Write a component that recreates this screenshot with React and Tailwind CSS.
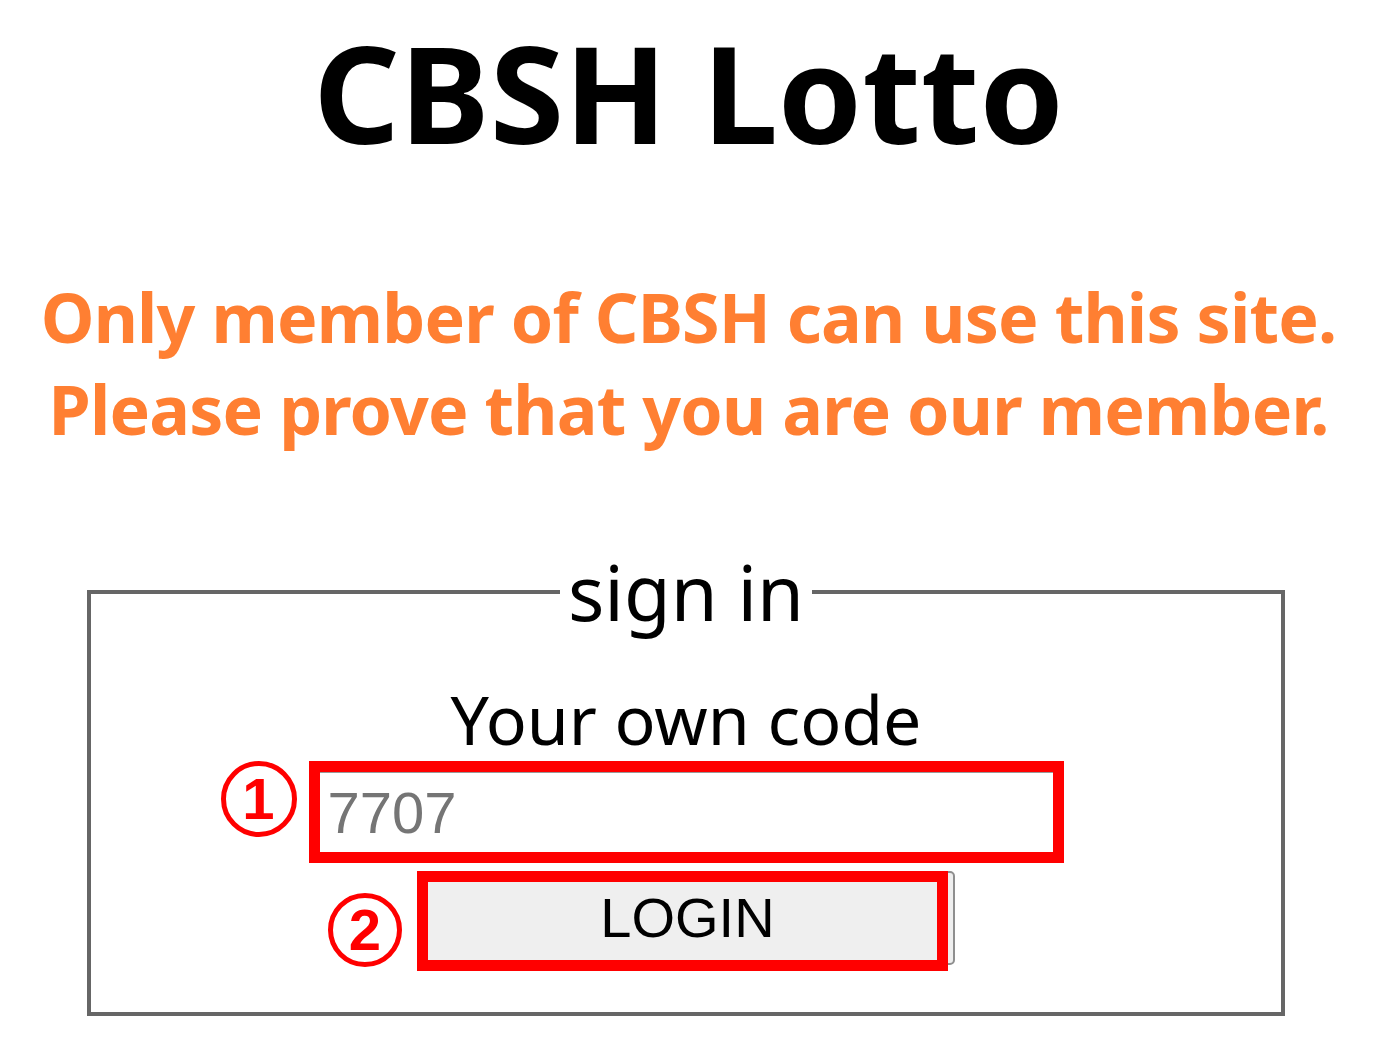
export default function App() {
  const sans = { fontFamily: '"Noto Sans", "Open Sans", sans-serif' };
  const arial = { fontFamily: '"Liberation Sans", Arial, sans-serif' };
  return (
    <div className="w-[1377px] h-[1059px] bg-white overflow-hidden" style={sans}>
      <h1 className="text-center text-[135px] leading-[184px] font-bold text-black">
        CBSH Lotto
      </h1>
      <div className="mt-[87px] whitespace-nowrap text-center text-[68px] leading-[92px] font-bold tracking-[-0.8px] text-[#ff7f32]">
        <div>Only member of CBSH can use this site.</div>
        <div>Please prove that you are our member.</div>
      </div>
      <fieldset className="mt-[99px] ml-[87px] w-[1198px] border-[4px] border-[#666666] pb-[41px]">
        <legend className="mx-auto px-[8px] text-[76px] leading-[76px] text-black">sign in</legend>
        <div className="mt-[54px] text-center text-[68px] leading-[70px] text-black">Your own code</div>
        <div className="relative mx-auto mt-[7px] w-[755px] h-[102px] border-[11px] border-[#ff0000]">
          <div
            className="h-full w-full border-t border-[#999] bg-white pl-[8px] text-[58px] leading-[79px] text-[#757575]"
            style={arial}
          >
            7707
          </div>
          <div
            className="absolute right-full top-[-11px] mr-[23px] flex h-[76px] w-[76px] items-center justify-center rounded-full border-[5px] border-[#ff0000] text-[58px] font-bold leading-none text-[#ff0000]"
            style={arial}
          >
            1
          </div>
        </div>
        <div className="relative mx-auto mt-[8px] w-[538px] h-[100px]">
          <div
            className="ml-[3px] mt-[3px] flex h-[94px] w-[535px] items-center justify-center rounded-[5px] border-2 border-[#8f8f8f] bg-[#efefef] text-[56px] text-black"
            style={arial}
          >
            LOGIN
          </div>
          <div className="absolute left-0 top-0 h-[100px] w-[531px] border-[11px] border-[#ff0000]" />
          <div
            className="absolute right-full top-[22px] mr-[15px] flex h-[74px] w-[74px] items-center justify-center rounded-full border-[5px] border-[#ff0000] text-[58px] font-bold leading-none text-[#ff0000]"
            style={arial}
          >
            2
          </div>
        </div>
      </fieldset>
    </div>
  );
}
